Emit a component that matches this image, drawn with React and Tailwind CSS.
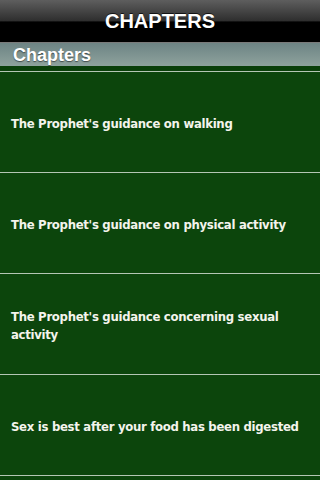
import React from "react";

const items = [
  "The Prophet's guidance on walking",
  "The Prophet's guidance on physical activity",
  "The Prophet's guidance concerning sexual activity",
  "Sex is best after your food has been digested",
  "",
];

export default function App() {
  return (
    <div className="w-[320px] h-[480px] overflow-hidden bg-[#0c450c] flex flex-col">
      <div className="h-[43px] shrink-0 flex items-center justify-center bg-[linear-gradient(#5e5e5e,#2e2e2e_50%,#000_52%,#000)] border-b border-[#7a7a7a]">
        <span
          className="text-white text-[20px] font-bold [text-shadow:0_-1px_0_rgba(0,0,0,0.7)]"
          style={{ fontFamily: '"Liberation Sans", Arial, sans-serif' }}
        >
          CHAPTERS
        </span>
      </div>
      <div className="h-[23px] shrink-0 flex items-center px-[13px] bg-[linear-gradient(#6d8484,#8ea29d)]">
        <span
          className="text-white text-[18px] font-bold leading-none [text-shadow:0_1px_1px_rgba(0,0,0,0.5)]"
          style={{ fontFamily: '"Liberation Sans", Arial, sans-serif' }}
        >
          Chapters
        </span>
      </div>
      <div className="h-[5px] shrink-0 bg-[#0a3f0a]" />
      {items.map((t, i) => (
        <div
          key={i}
          className="h-[101px] shrink-0 border-t-[1.5px] border-[#b4c6b4] flex items-center pl-[11px] pr-[20px] pt-[3px]"
        >
          <span
            className="text-[#f4f4ec] text-[13px] leading-[18px] font-bold tracking-[-0.3px]"
            style={{ fontFamily: '"DejaVu Sans Condensed", sans-serif' }}
          >
            {t}
          </span>
        </div>
      ))}
    </div>
  );
}
